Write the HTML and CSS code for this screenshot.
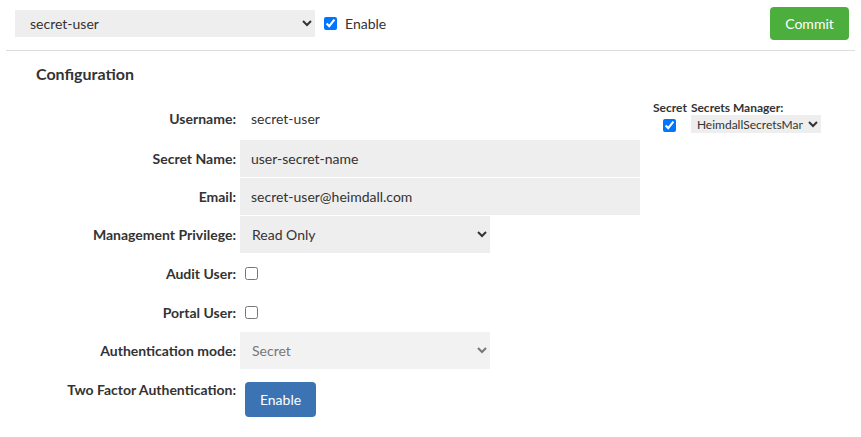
FILE: index.html
```html
<!DOCTYPE html>
<html lang="en">
<head>
    <meta charset="UTF-8">
    <meta name="viewport" content="width=device-width, initial-scale=1.0">
    <title>User Configuration</title>
    <link rel="stylesheet" href="styles.css">
</head>
<body>
    <!-- Toolbar -->
    <div class="toolbar">
        <select class="user-select">
            <option>secret-user</option>
        </select>
        <label class="enable-toggle">
            <input type="checkbox" checked>
            <span>Enable</span>
        </label>
        <button class="btn btn-commit">Commit</button>
    </div>

    <div class="content">
        <h2>Configuration</h2>

        <div class="config-layout">
            <div class="form-grid">
                <div class="form-row row-username">
                    <label>Username:</label>
                    <div class="value-text">secret-user</div>
                </div>
                <div class="form-row">
                    <label>Secret Name:</label>
                    <input type="text" class="field" value="user-secret-name">
                </div>
                <div class="form-row">
                    <label>Email:</label>
                    <input type="text" class="field" value="secret-user@heimdall.com">
                </div>
                <div class="form-row">
                    <label>Management Privilege:</label>
                    <select class="field field-select">
                        <option>Read Only</option>
                    </select>
                </div>
                <div class="form-row row-check">
                    <label>Audit User:</label>
                    <div><input type="checkbox" class="check"></div>
                </div>
                <div class="form-row row-check">
                    <label>Portal User:</label>
                    <div><input type="checkbox" class="check"></div>
                </div>
                <div class="form-row">
                    <label>Authentication mode:</label>
                    <select class="field field-select" disabled>
                        <option>Secret</option>
                    </select>
                </div>
                <div class="form-row row-2fa">
                    <label>Two Factor Authentication:</label>
                    <div><button class="btn btn-enable">Enable</button></div>
                </div>
            </div>

            <!-- Secrets manager side panel -->
            <table class="secret-panel">
                <thead>
                    <tr>
                        <th>Secret</th>
                        <th>Secrets Manager:</th>
                    </tr>
                </thead>
                <tbody>
                    <tr>
                        <td class="center"><input type="checkbox" checked></td>
                        <td>
                            <select class="manager-select">
                                <option>HeimdallSecretsManager</option>
                            </select>
                        </td>
                    </tr>
                </tbody>
            </table>
        </div>
    </div>
</body>
</html>
```

FILE: styles.css
```css
:root {
    --text-color: #333;
    --field-bg: #eee;
    --line-color: #ddd;
    --green: #4cae3c;
    --blue: #3c74b3;
}

* {
    margin: 0;
    padding: 0;
    box-sizing: border-box;
}

body {
    font-family: 'Lato', 'Liberation Sans', sans-serif;
    font-size: 14px;
    color: var(--text-color);
    background: #fff;
}

.toolbar {
    display: flex;
    align-items: center;
    margin: 0 6px;
    padding: 7px 6px 10px 9px;
    border-bottom: 1px solid var(--line-color);
}

.user-select {
    width: 300px;
    height: 27px;
    padding: 0 11px;
    border: none;
    background-color: var(--field-bg);
    font-family: inherit;
    font-size: 14px;
    color: var(--text-color);
}

.enable-toggle {
    display: flex;
    align-items: center;
    margin-left: 9px;
}

.enable-toggle input {
    width: 13px;
    height: 13px;
    margin: 0 8px 0 0;
}

.btn {
    border: none;
    border-radius: 4px;
    color: #fff;
    font-family: inherit;
    cursor: pointer;
}

.btn-commit {
    margin-left: auto;
    width: 79px;
    height: 33px;
    background-color: var(--green);
    font-size: 14px;
}

.content {
    padding: 0 36px;
}

h2 {
    font-size: 16px;
    font-weight: bold;
    line-height: 20px;
    margin-top: 13px;
}

.config-layout {
    display: flex;
    align-items: flex-start;
    margin-top: 14px;
}

.form-grid {
    display: flex;
    flex-direction: column;
    gap: 1px;
}

.form-row {
    display: grid;
    grid-template-columns: 200px 400px;
    column-gap: 4px;
    align-items: center;
    height: 37px;
}

.form-row label {
    text-align: right;
    font-weight: bold;
}

.row-username {
    height: 40px;
    margin-bottom: 1px;
}

.row-check {
    height: 38px;
}

.value-text {
    padding-left: 11px;
}

.field {
    height: 37px;
    width: 100%;
    padding: 0 11px;
    border: none;
    background-color: var(--field-bg);
    font-family: inherit;
    font-size: 14px;
    color: var(--text-color);
}

.field-select {
    width: 250px;
    padding: 0 8px;
}

.field-select:disabled {
    background-color: #f2f2f2;
    color: #777;
    opacity: 1;
}

.check {
    display: block;
    width: 13px;
    height: 13px;
    margin-left: 5px;
}

.row-2fa {
    align-items: start;
    height: auto;
    margin-top: 11px;
}

.row-2fa label {
    line-height: 18px;
}

.btn-enable {
    margin-left: 5px;
    margin-top: 1px;
    width: 71px;
    height: 35px;
    background-color: var(--blue);
    font-size: 14px;
}

.secret-panel {
    margin-left: 13px;
    margin-top: 3px;
    border-collapse: collapse;
    font-size: 12px;
}

.secret-panel th {
    text-align: left;
    font-weight: bold;
    line-height: 14px;
    padding: 0 4px 0 0;
}

.secret-panel td {
    padding: 0;
    vertical-align: middle;
}

.secret-panel .center {
    text-align: center;
    padding-right: 4px;
}

.secret-panel input {
    width: 13px;
    height: 13px;
    margin: 0;
    vertical-align: middle;
}

.manager-select {
    width: 130px;
    height: 18px;
    border: none;
    background-color: var(--field-bg);
    font-family: inherit;
    font-size: 12px;
    color: var(--text-color);
    padding: 0 2px;
}
```
